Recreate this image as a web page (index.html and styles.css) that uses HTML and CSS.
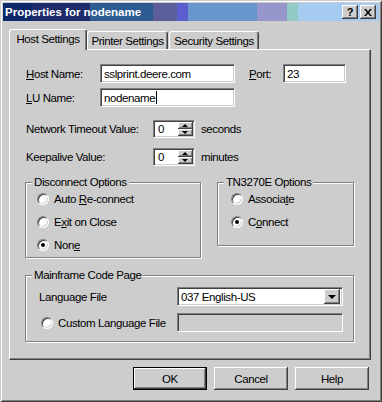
FILE: index.html
```html
<!DOCTYPE html>
<html>
<head>
<meta charset="utf-8">
<link rel="stylesheet" href="styles.css">
</head>
<body>
<div class="window">
  <div class="titlebar">
    <span class="title">Properties for nodename</span>
    <div class="tbtns">
      <span class="tbtn q">?</span>
      <span class="tbtn"><svg width="8" height="7" viewBox="0 0 8 7"><path d="M0 0h2l2 2.5 2-2.5h2L5 3.5 8 7H6L4 4.5 2 7H0l3-3.5z" fill="#000"/></svg></span>
    </div>
  </div>
  <div class="tabs">
    <div class="tab active w1">Host Settings</div>
    <div class="tab w2">Printer Settings</div>
    <div class="tab w3">Security Settings</div>
  </div>
  <div class="panel">
    <div class="row r1">
      <span class="lbl w-host"><u>H</u>ost Name:</span>
      <span class="field f-host">sslprint.deere.com</span>
      <span class="lbl w-port"><u>P</u>ort:</span>
      <span class="field f-port">23</span>
    </div>
    <div class="row r2">
      <span class="lbl w-host"><u>L</u>U Name:</span>
      <span class="field f-host"><span>nodename</span><span class="caret"></span></span>
    </div>
    <div class="row r3">
      <span class="lbl w-spin">Network Timeout Value:</span>
      <span class="spin"><span class="spin-val">0</span><span class="spin-btns"><span class="sbtn"><span class="tri-up"></span></span><span class="sbtn"><span class="tri-down"></span></span></span></span>
      <span class="unit">seconds</span>
    </div>
    <div class="row r4">
      <span class="lbl w-spin">Keepalive Value:</span>
      <span class="spin"><span class="spin-val">0</span><span class="spin-btns"><span class="sbtn"><span class="tri-up"></span></span><span class="sbtn"><span class="tri-down"></span></span></span></span>
      <span class="unit">minutes</span>
    </div>
    <div class="groups">
      <div class="group g-disc">
        <span class="gtitle">Disconnect Options</span>
        <div class="opts">
          <div class="opt"><span class="radio"></span><span>Auto <u>R</u>e-connect</span></div>
          <div class="opt"><span class="radio"></span><span>E<u>x</u>it on Close</span></div>
          <div class="opt"><span class="radio on"></span><span>Non<u>e</u></span></div>
        </div>
      </div>
      <div class="group g-tn">
        <span class="gtitle">TN3270E Options</span>
        <div class="opts">
          <div class="opt"><span class="radio"></span><span>Associa<u>t</u>e</span></div>
          <div class="opt"><span class="radio on"></span><span>C<u>o</u>nnect</span></div>
        </div>
      </div>
    </div>
    <div class="group g-main">
      <span class="gtitle">Mainframe Code Page</span>
      <div class="mrow">
        <span class="mlbl">Language File</span>
        <span class="field select"><span class="sel-text">037 English-US</span><span class="dd"><span class="tri-down big"></span></span></span>
      </div>
      <div class="mrow m2">
        <span class="mlbl"><span class="radio"></span><span>Custom Language File</span></span>
        <span class="field select disabled"></span>
      </div>
    </div>
  </div>
  <div class="buttons">
    <span class="btn default">OK</span>
    <span class="btn">Cancel</span>
    <span class="btn">Help</span>
  </div>
</div>
</body>
</html>
```
FILE: styles.css
```css
* { box-sizing: border-box; }
body {
  margin: 0;
  background: #cdcdcd;
  font-family: "Liberation Sans", Arial, sans-serif;
  font-size: 11.5px;
  letter-spacing: -0.4px;
  white-space: nowrap;
  color: #000;
}
.window {
  width: 382px;
  height: 402px;
  background: #cdcdcd;
  padding: 3px;
  box-shadow: inset 1px 1px #cdcdcd, inset -1px -1px #404040, inset 2px 2px #fff, inset -2px -2px #808080;
  display: flex;
  flex-direction: column;
}
.titlebar {
  height: 18px;
  display: flex;
  align-items: center;
  justify-content: space-between;
  padding: 0 3px 0 2px;
  background: linear-gradient(to right,
    #0c2a6a 0 29px, #1e2c6c 29px 87px, #2d5b93 87px 150px,
    #5b5e98 150px 174px, #5a5ece 174px 185px, #6696cc 185px 254px,
    #9496cc 254px 284px, #92cac8 284px 295px, #a6caf0 295px);
}
.title {
  color: #fff;
  font-weight: bold;
  font-size: 11.5px;
  letter-spacing: 0;
}
.tbtns { display: flex; gap: 2px; }
.tbtn {
  width: 16px;
  height: 14px;
  background: #cdcdcd;
  display: flex;
  align-items: center;
  justify-content: center;
  box-shadow: inset -1px -1px #404040, inset 1px 1px #fff, inset -2px -2px #808080;
}
.tbtn.q {
  font-weight: bold;
  font-size: 11px;
  letter-spacing: 0;
  padding-bottom: 1px;
}
.tabs {
  display: flex;
  align-items: flex-end;
  height: 20px;
  margin: 8px 0 0 6px;
  position: relative;
  z-index: 1;
}
.tab {
  height: 18px;
  background: #cdcdcd;
  border-top: 1px solid #fff;
  border-left: 1px solid #fff;
  border-right: 1px solid #404040;
  border-radius: 3px 3px 0 0;
  box-shadow: inset -1px 0 #808080;
  display: flex;
  align-items: center;
  justify-content: center;
  padding-top: 1px;
}
.tab.active { height: 21px; margin-bottom: -1px; padding-top: 0; padding-bottom: 2px; }
.w1 { width: 78px; }
.w2 { width: 81px; }
.w3 { width: 90px; margin-left: 1px; }
.panel {
  margin-left: 6px;
  width: 362px;
  height: 311px;
  border: 1px solid;
  border-color: #fff #404040 #404040 #fff;
  box-shadow: inset -1px -1px #808080;
}
.row { display: flex; align-items: center; margin-left: 16px; }
.r1 { margin-top: 14px; height: 19px; }
.r2 { margin-top: 5px; height: 19px; }
.r3 { margin-top: 13px; height: 18px; }
.r4 { margin-top: 10px; height: 18px; }
.w-host { width: 74px; }
.w-port { width: 34px; margin-left: 14px; }
.w-spin { width: 127px; }
.field {
  height: 19px;
  background: #fff;
  border: 1px solid;
  border-color: #808080 #fff #fff #808080;
  box-shadow: inset 1px 1px #404040, inset -1px -1px #cdcdcd;
  display: flex;
  align-items: center;
  padding-left: 3px;
}
.f-host { width: 135px; }
.f-port { width: 63px; }
.caret { width: 1px; height: 13px; background: #000; margin-left: 1px; }
.spin {
  width: 42px;
  height: 18px;
  background: #fff;
  border: 1px solid;
  border-color: #808080 #fff #fff #808080;
  box-shadow: inset 1px 1px #404040, inset -1px -1px #cdcdcd;
  display: flex;
  padding: 1px 1px 1px 2px;
}
.spin-val { flex: 1; display: flex; align-items: center; padding-left: 2px; }
.spin-btns { width: 15px; display: flex; flex-direction: column; }
.sbtn {
  flex: 1;
  background: #cdcdcd;
  box-shadow: inset -1px -1px #404040, inset 1px 1px #fff, inset -2px -2px #808080;
  display: flex;
  align-items: center;
  justify-content: center;
  padding-right: 1px;
}
.tri-up { width: 0; height: 0; border-left: 3px solid transparent; border-right: 3px solid transparent; border-bottom: 3px solid #000; }
.tri-down { width: 0; height: 0; border-left: 3px solid transparent; border-right: 3px solid transparent; border-top: 3px solid #000; }
.tri-down.big { border-left-width: 4px; border-right-width: 4px; border-top-width: 4px; }
.unit { margin-left: 6px; }
.groups { display: flex; align-items: flex-start; gap: 16px; margin: 16px 0 0 15px; }
.group {
  position: relative;
  border: 1px solid #808080;
  box-shadow: inset 1px 1px #fff, 1px 1px #fff;
}
.gtitle {
  position: absolute;
  top: -8px;
  left: 6px;
  padding: 0 2px;
  background: #cdcdcd;
  line-height: 14px;
}
.g-disc { width: 176px; height: 76px; padding: 9px 0 0 11px; }
.g-tn { width: 137px; height: 64px; padding: 9px 0 0 13px; }
.opts { display: flex; flex-direction: column; gap: 9px; }
.opt { display: flex; align-items: center; height: 14px; }
.radio {
  width: 12px;
  height: 12px;
  border-radius: 50%;
  background: #fff;
  border: 1px solid;
  border-color: #808080 #fff #fff #808080;
  box-shadow: inset 1px 1px #404040, inset -1px -1px #cdcdcd;
  margin-right: 5px;
  display: flex;
  align-items: center;
  justify-content: center;
  flex: none;
}
.radio.on::after { content: ""; width: 4px; height: 4px; border-radius: 50%; background: #000; }
.g-main { width: 329px; height: 67px; margin: 17px 0 0 15px; padding: 11px 0 0 13px; }
.mrow { display: flex; align-items: center; height: 19px; }
.m2 { margin-top: 7px; }
.mlbl { width: 138px; display: flex; align-items: center; }
.m2 .mlbl { padding-left: 2px; }
.select { width: 166px; padding: 2px 2px 2px 3px; }
.sel-text { flex: 1; }
.dd {
  width: 16px;
  height: 15px;
  background: #cdcdcd;
  box-shadow: inset -1px -1px #404040, inset 1px 1px #fff, inset -2px -2px #808080;
  display: flex;
  align-items: center;
  justify-content: center;
}
.select.disabled { background: #cdcdcd; }
.buttons { display: flex; justify-content: flex-end; gap: 7px; margin-top: 7px; padding-right: 10px; }
.btn {
  width: 74px;
  height: 23px;
  background: #cdcdcd;
  display: flex;
  align-items: center;
  justify-content: center;
  box-shadow: inset -1px -1px #404040, inset 1px 1px #fff, inset -2px -2px #808080;
}
.btn.default {
  border: 1px solid #000;
}
```
